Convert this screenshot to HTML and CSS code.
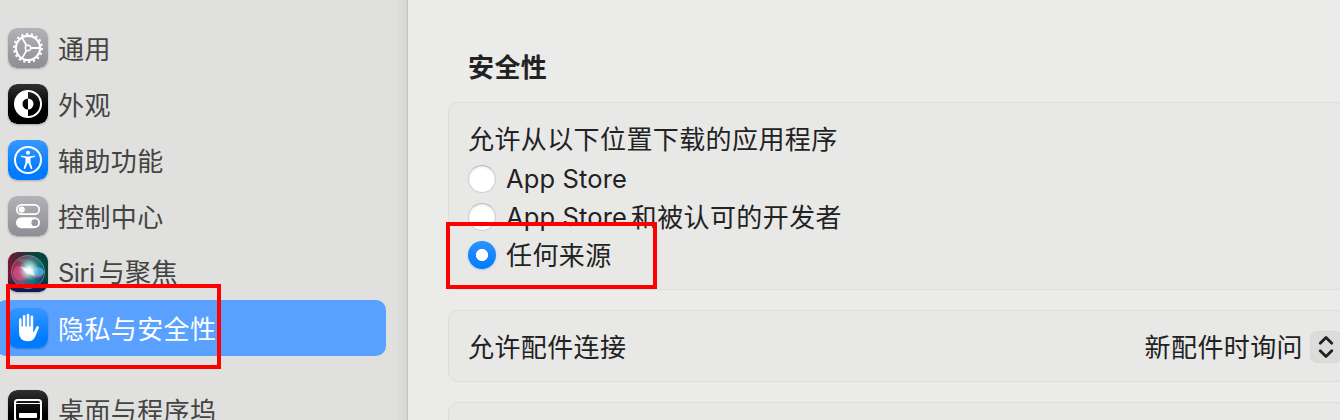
FILE: index.html
```html
<!DOCTYPE html>
<html lang="zh-CN">
<head>
<meta charset="utf-8">
<title>隐私与安全性</title>
<link rel="stylesheet" href="styles.css">
</head>
<body>
<div class="window">
  <nav class="sidebar">
    <div class="item">
      <svg class="icon" viewBox="0 0 40 40">
        <defs><linearGradient id="gray" x1="0" y1="0" x2="0" y2="1"><stop offset="0" stop-color="#b3b2b7"/><stop offset="1" stop-color="#8e8d93"/></linearGradient>
        <linearGradient id="black" x1="0" y1="0" x2="0" y2="1"><stop offset="0" stop-color="#303030"/><stop offset=".6" stop-color="#000"/></linearGradient>
        <linearGradient id="blue" x1="0" y1="0" x2="0" y2="1"><stop offset="0" stop-color="#3697ff"/><stop offset=".8" stop-color="#007aff"/></linearGradient></defs>
        <rect width="40" height="40" rx="9" fill="url(#gray)"/>
        <g fill="none" stroke="#fff">
          <circle cx="20" cy="20" r="14" stroke-width="2.2" stroke-dasharray="2.2 2.687"/>
          <circle cx="20" cy="20" r="12.1" stroke-width="2.2"/>
          <circle cx="20" cy="20" r="2.7" stroke-width="1.5"/>
          <path d="M22.7 20H32M18.6 17.7L14 9.6M18.6 22.3L14 30.4" stroke-width="1.8"/>
        </g>
      </svg>
      <span>通用</span>
    </div>
    <div class="item">
      <svg class="icon" viewBox="0 0 40 40">
        <rect width="40" height="40" rx="9" fill="url(#black)"/>
        <circle cx="20" cy="20" r="13" fill="none" stroke="#fff" stroke-width="2"/>
        <path d="M20 7a13 13 0 0 0 0 26V25.5a5.5 5.5 0 0 1 0-11zM20 14.5a5.5 5.5 0 0 1 0 11z" fill="#fff"/>
      </svg>
      <span>外观</span>
    </div>
    <div class="item">
      <svg class="icon" viewBox="0 0 40 40">
        <rect width="40" height="40" rx="9" fill="url(#blue)"/>
        <circle cx="20" cy="20" r="13" fill="none" stroke="#fff" stroke-width="2"/>
        <circle cx="20" cy="12.8" r="2" fill="#fff"/>
        <path d="M13.3 15.6l5.1.9h3.2l5.1-.9q.9.9-.1 1.5l-4.1 1v4.2l1.9 6.3q-.8 1.1-1.6.2L20.3 23h-.6l-2.5 5.8q-.8.9-1.6-.2l1.9-6.3v-4.2l-4.1-1q-1-.6-.1-1.5z" fill="#fff"/>
      </svg>
      <span>辅助功能</span>
    </div>
    <div class="item">
      <svg class="icon" viewBox="0 0 40 40">
        <rect width="40" height="40" rx="9" fill="url(#gray)"/>
        <rect x="8.8" y="8.8" width="22.4" height="9.4" rx="4.7" fill="none" stroke="#fff" stroke-width="1.7"/>
        <circle cx="13.7" cy="13.5" r="3.1" fill="#fff"/>
        <rect x="8" y="21.2" width="24" height="11" rx="5.5" fill="#fff"/>
        <circle cx="26.8" cy="26.7" r="3.4" fill="#99989d"/>
      </svg>
      <span>控制中心</span>
    </div>
    <div class="item">
      <svg class="icon" viewBox="0 0 40 40">
        <defs>
          <linearGradient id="siri" x1="0" y1="0" x2="1" y2="0"><stop offset="0" stop-color="#7d1733"/><stop offset=".35" stop-color="#3a2a38"/><stop offset=".7" stop-color="#07453c"/><stop offset="1" stop-color="#08443c"/></linearGradient>
          <linearGradient id="base" x1="0" y1="0" x2="0" y2="1"><stop offset=".6" stop-color="#111450" stop-opacity="0"/><stop offset="1" stop-color="#111450"/></linearGradient>
          <linearGradient id="orb" x1="0" y1=".3" x2="1" y2=".7"><stop offset="0" stop-color="#cb2158"/><stop offset=".45" stop-color="#75859b"/><stop offset=".75" stop-color="#198ea1"/><stop offset="1" stop-color="#153e76"/></linearGradient>
          <radialGradient id="glow"><stop offset="0" stop-color="#fff"/><stop offset=".3" stop-color="#e4ffff" stop-opacity=".85"/><stop offset="1" stop-color="#8deaf0" stop-opacity="0"/></radialGradient>
        </defs>
        <rect width="40" height="40" rx="9" fill="url(#siri)"/>
        <rect width="40" height="40" rx="9" fill="url(#base)"/>
        <circle cx="20" cy="20" r="16.5" fill="url(#orb)" fill-opacity=".65" stroke="#8aa9a9" stroke-opacity=".65" stroke-width=".9"/>
        <path d="M9 8Q25 3 31 19 19 14 9 8z" fill="#4bbf9c" opacity=".35"/>
        <path d="M5 21c1-10 10-8 16-2 6-5 13-5 15 1-2 8-9 7-14 2-6 9-15 9-17-1z" fill="#e84a86" opacity=".7"/>
        <path d="M21 20q13-9 15 0-3 8-15 0z" fill="#2fb3e5" opacity=".85"/>
        <circle cx="21" cy="18" r="11" fill="url(#glow)"/>
        <path d="M13 15L24 17 27 24 18 21z" fill="#fff" opacity=".7"/>
      </svg>
      <span><span class="siri">Siri</span>与聚焦</span>
    </div>
    <div class="item selected">
      <svg class="icon" viewBox="0 0 40 40">
        <rect width="40" height="40" rx="9" fill="url(#blue)"/>
        <g stroke="#fff" stroke-width="2.6" stroke-linecap="round" fill="none">
          <path d="M12.3 23V11.6M16.1 20V8.3M20 20V7.1M23.9 20V8.7"/>
        </g>
        <path d="M11 18.5h14.2v5.2q.5.4.9-.3l2.2-4.4q.8-1.4 2-.8 1 .6.4 2L27.2 28.8q-2 4.5-7.3 4.5-8.9 0-8.9-9z" fill="#fff"/>
      </svg>
      <span>隐私与安全性</span>
    </div>
    <div class="item next-group">
      <svg class="icon" viewBox="0 0 40 40">
        <rect width="40" height="40" rx="9" fill="url(#black)"/>
        <rect x="7" y="10" width="26" height="21" rx="2.6" fill="none" stroke="#fff" stroke-width="2"/>
        <path d="M8 13.5H32" stroke="#fff" stroke-width="1"/>
        <rect x="11" y="23" width="18" height="5" rx=".8" fill="#fff"/>
      </svg>
      <span>桌面与程序坞</span>
    </div>
  </nav>
  <main class="content">
    <h2 class="heading">安全性</h2>
    <section class="card sources">
      <div class="title">允许从以下位置下载的应用程序</div>
      <div class="option"><i class="radio"></i><span class="latin">App Store</span></div>
      <div class="option"><i class="radio"></i><span class="latin">App Store</span><span class="cjk after">和被认可的开发者</span></div>
      <div class="option"><i class="radio on"></i><span class="cjk">任何来源</span></div>
    </section>
    <section class="card accessory">
      <span class="cjk">允许配件连接</span>
      <div class="select">
        <span class="cjk">新配件时询问</span>
        <svg class="stepper" viewBox="0 0 32 32"><rect x=".5" y=".5" width="31" height="31" rx="6.5" fill="#dcdcdb" stroke="#d7d7d6"/><path d="M10.2 12.2L16 6.4l5.8 5.8M10.2 19.8l5.8 5.8 5.8-5.8" fill="none" stroke="#202020" stroke-width="2.8" stroke-linecap="round" stroke-linejoin="round"/></svg>
      </div>
    </section>
    <section class="card more"></section>
  </main>
  <div class="mark mark-sidebar"></div>
  <div class="mark mark-option"></div>
</div>
</body>
</html>
```
FILE: styles.css
```css
* { box-sizing: border-box; }
body {
  margin: 0;
  font-family: "Noto Sans CJK SC", sans-serif;
  font-size: 26px;
  line-height: 38px;
  letter-spacing: 0.4px;
  color: #222;
}
.window {
  position: relative;
  display: flex;
  width: 1340px;
  height: 420px;
  overflow: hidden;
  background: #ebebe9;
}
.sidebar {
  flex: none;
  width: 408px;
  padding-top: 20px;
  color: #444443;
  background: linear-gradient(90deg, transparent 396px, rgba(0, 0, 0, .05) 407px, #c4c4c3 407px), #e0e0de;
}
.item {
  display: flex;
  align-items: center;
  gap: 10px;
  width: 386px;
  height: 56px;
  padding-left: 8px;
  white-space: nowrap;
}
.item > span { padding-bottom: 1px; }
.icon {
  flex: none;
  width: 40px;
  height: 40px;
  border-radius: 9px;
  box-shadow: 0 1px 2px rgba(0, 0, 0, .25);
}
.selected {
  width: 390px;
  margin-left: -4px;
  padding-left: 12px;
  color: #fff;
  background: #5aa1ff;
  border-radius: 10px;
}
.next-group { margin-top: 26px; }
.latin, .siri {
  font-family: Inter, sans-serif;
  font-size: 25.5px;
}
.latin { letter-spacing: 0.15px; }
.siri { margin-right: 4px; letter-spacing: -0.5px; }
.content {
  flex: none;
  width: 952px;
  padding: 47px 0 0 40px;
}
.heading {
  margin: 0 0 17px 20px;
  font-size: 26px;
  font-weight: 700;
  line-height: 38px;
}
.card {
  padding: 0 20px;
  background: #e8e8e6;
  border: 1px solid #dddddb;
  border-radius: 10px;
}
.sources {
  height: 188px;
  padding: 16px 19px 0;
}
.title { height: 41px; }
.option {
  display: flex;
  align-items: center;
  height: 38px;
}
.cjk { padding-bottom: 2px; }
.radio {
  flex: none;
  width: 28px;
  height: 28px;
  margin-right: 10px;
  border: 1px solid #cfcfcd;
  border-top-color: #bdbdbb;
  border-radius: 50%;
  background: #fff;
  box-shadow: inset 0 1px 2px rgba(0, 0, 0, .12);
}
.radio.on {
  border: 0;
  background: radial-gradient(circle, #fff 5.7px, transparent 6.4px), linear-gradient(#2e92ff, #007aff);
  box-shadow: 0 1px 2px rgba(0, 90, 255, .25);
}
.after { margin-left: 3.6px; }
.accessory {
  display: flex;
  align-items: center;
  justify-content: space-between;
  height: 72px;
  margin-top: 20px;
  padding: 2px 17px 0 19px;
}
.select {
  display: flex;
  align-items: center;
  gap: 7px;
}
.stepper { width: 32px; height: 32px; }
.more { height: 72px; margin-top: 20px; }
.mark {
  position: absolute;
  border: 4px solid #f00;
}
.mark-sidebar { left: 6px; top: 284px; width: 215px; height: 85px; }
.mark-option { left: 446px; top: 222px; width: 211px; height: 67px; }
```
